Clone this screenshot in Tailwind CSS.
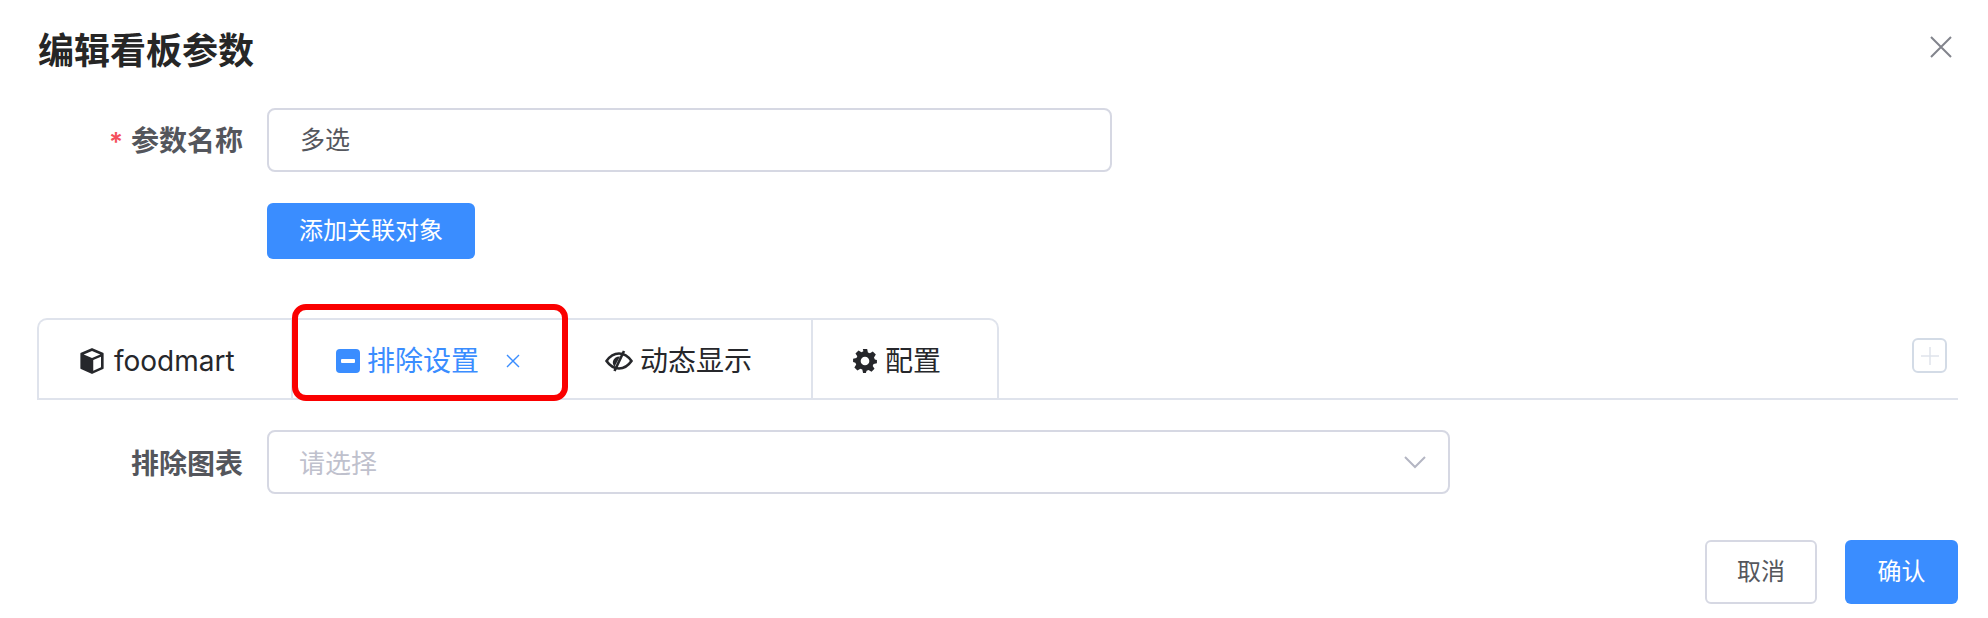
<!DOCTYPE html>
<html lang="zh-CN">
<head>
    <meta charset="UTF-8" />
    <title>编辑看板参数</title>
    <script src="https://cdn.jsdelivr.net/npm/@tailwindcss/browser@4"></script>
</head>
<body class="bg-white w-[1988px] h-[618px] overflow-hidden font-['Inter','Noto_Sans_CJK_SC',sans-serif]">
    <div class="relative h-full px-[30px]">
        <!-- Header -->
        <div class="flex items-center justify-between h-[100px] pl-2">
            <h1 class="text-[36px] leading-[50px] font-semibold text-[#262626] mt-[2px]">编辑看板参数</h1>
            <svg class="w-[22px] h-[22px] mr-[6px] mb-[6px]" viewBox="0 0 22 22" fill="none" stroke="#82848c" stroke-width="2"><path d="M1 1l20 20M21 1L1 21" /></svg>
        </div>

        <!-- Name field -->
        <div class="flex items-center h-[64px] mt-[8px]">
            <label class="w-[237px] pr-[24px] pt-[2px] text-right text-[28px] font-semibold text-[#54565c]"><span class="text-[#f4505c] mr-2 text-[26px]">*</span>参数名称</label>
            <div class="w-[845px] h-full flex items-center pl-[31px] pt-[2px] border-2 border-[#d6d8e3] rounded-[8px] text-[25px] text-[#55575d]">多选</div>
        </div>
        <div class="pl-[237px] mt-[31px]">
            <button class="w-[208px] h-[56px] rounded-[6px] bg-[#3a8dff] text-white text-[24px]">添加关联对象</button>
        </div>

        <!-- Tabs -->
        <div class="flex items-end justify-between h-[82px] mt-[59px] ml-[7px] border-b-2 border-[#dfe3ec]">
            <div class="flex h-[80px] border-2 border-b-0 border-[#dfe3ec] rounded-t-[10px]">
                <div class="w-[254px] flex items-center gap-[7px] pl-[38px] pt-[3px] text-[28px] text-[#26272b] border-r-2 border-[#dfe3ec]">
                    <svg class="w-[30px] h-[30px]" viewBox="0 0 24 24"><path fill="#26272b" stroke="#26272b" stroke-width="1.6" stroke-linejoin="round" d="M12 2.5l8.5 3.600v11.600L12 21.500l-8.500-3.800V6.100z" /><path fill="#fff" d="M12 3.900l6.600 2.800-6.600 2.800-6.600-2.800zM13 11.200l6.200-2.600v8.300l-6.200 2.800z" /></svg>
                    foodmart
                </div>
                <div class="w-[258px] flex items-center pl-[43px] pt-[3px] text-[28px] text-[#3a8dff]">
                    <svg class="w-[24px] h-[24px] mr-[7px]" viewBox="0 0 24 24"><rect width="24" height="24" rx="4" fill="#3a8dff" /><rect x="5" y="10" width="14" height="4" rx="1" fill="#fff" /></svg>
                    排除设置
                    <svg class="w-[14px] h-[14px] ml-[27px]" viewBox="0 0 14 14" fill="none" stroke="#3a8dff" stroke-width="1.400"><path d="M1 1l12 12M13 1L1 13" /></svg>
                </div>
                <div class="w-[262px] flex items-center pl-[54px] pt-[3px] gap-[7px] text-[28px] text-[#26272b] border-r-2 border-[#dfe3ec]">
                    <svg class="w-[28px] h-[22px]" viewBox="0 0 28 22" fill="none" stroke="#26272b" stroke-width="2.600"><path d="M1.500 11C5 6 9 3.500 14 3.500S23 6 26.500 11C23 16 19 18.500 14 18.500S5 16 1.500 11z" /><path d="M19 1L9.500 21" /><path fill="#26272b" stroke="none" d="M15 6.500L9.600 16.500C8 15 7.500 13 8 11 8.800 8.300 11.500 6.300 15 6.500z" /></svg>
                    动态显示
                </div>
                <div class="w-[184px] flex items-center pl-[39px] pt-[3px] gap-[7px] text-[28px] text-[#26272b]">
                    <svg class="w-[26px] h-[26px]" viewBox="0 0 24 24"><path fill="#26272b" fill-rule="evenodd" d="M10 1h4l.7 3.100 1.800.8 2.700-1.700 2.800 2.800-1.700 2.700.8 1.800L23 11v3l-3.100.7-.8 1.800 1.700 2.700-2.800 2.800-2.700-1.700-1.800.8L12.800 23h-2.600l-.7-3.100-1.800-.8L5 20.800 2.200 18l1.700-2.700-.8-1.800L1 13v-3l3.100-.7.8-1.800L3.200 5 6 2.200l2.700 1.700 1.800-.8zM12 8a4 4 0 100 8 4 4 0 000-8z" /></svg>
                    配置
                </div>
            </div>
            <div class="w-[35px] h-[35px] mb-[25px] mr-[11px] flex items-center justify-center border-2 border-[#d3dbe6] rounded-[6px]">
                <svg class="w-[20px] h-[20px]" viewBox="0 0 20 20" stroke="#dfe4ec" stroke-width="1.500"><path d="M10 1v18M1 10h18" /></svg>
            </div>
        </div>

        <!-- Exclude field -->
        <div class="flex items-center h-[64px] mt-[30px]">
            <label class="w-[237px] pr-[24px] pt-[3px] text-right text-[28px] font-semibold text-[#54565c]">排除图表</label>
            <div class="w-[1183px] h-full flex items-center justify-between pl-[30px] pr-[22px] border-2 border-[#d6d8e3] rounded-[8px] text-[26px] text-[#bfc1cd]">
                <span class="pt-[2px]">请选择</span>
                <svg class="w-[22px] h-[13px]" viewBox="0 0 22 13" fill="none" stroke="#b4b6c3" stroke-width="2"><path d="M1 1l10 10L21 1" /></svg>
            </div>
        </div>

        <!-- Footer -->
        <div class="flex justify-end gap-[28px] mt-[46px]">
            <button class="w-[112px] h-[64px] rounded-[6px] border-2 border-[#d6d8e3] text-[24px] text-[#55575d]">取消</button>
            <button class="w-[113px] h-[64px] rounded-[6px] bg-[#3a8dff] text-[24px] text-white">确认</button>
        </div>

        <!-- Red annotation around the active tab -->
        <div class="absolute left-[292px] top-[304px] w-[276px] h-[97px] border-[6px] border-[#fa0000] rounded-[14px]"></div>
    </div>
</body>
</html>
